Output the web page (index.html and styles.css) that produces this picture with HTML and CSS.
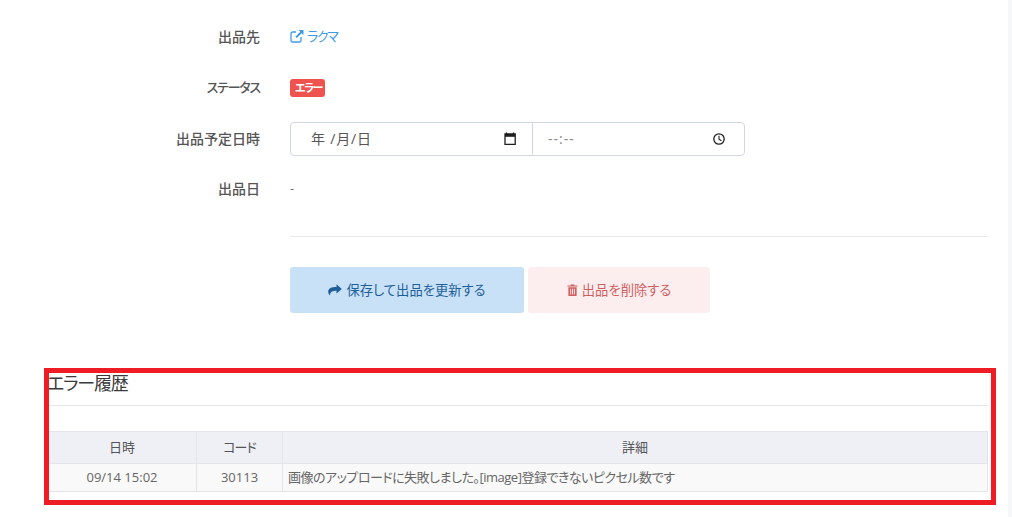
FILE: index.html
```html
<!DOCTYPE html>
<html lang="ja">
<head>
<meta charset="utf-8">
<title>出品</title>
<link rel="stylesheet" href="styles.css">
</head>
<body>
<main class="page">
  <form class="form">
    <div class="row">
      <div class="label">出品先</div>
      <div class="value"><a class="link" href="#"><svg class="icon-ext" viewBox="0 0 14 14" width="14" height="14"><path d="M6 3H2.6C1.7 3 1 3.7 1 4.6v6.8c0 .9.7 1.600 1.600 1.600h6.800c.9 0 1.600-.7 1.600-1.600V8" fill="none" stroke="currentColor" stroke-width="1.300"/><path d="M8.500 1H13.500V6L11.700 4.200 6.800 9.100 5.400 7.700 10.300 2.800Z" fill="currentColor"/></svg>ラクマ</a></div>
    </div>
    <div class="row">
      <div class="label label-kana">ステータス</div>
      <div class="value"><span class="badge">エラー</span></div>
    </div>
    <div class="row">
      <div class="label">出品予定日時</div>
      <div class="value">
        <div class="datetime">
          <div class="dt-field dt-date">
            <span class="dt-text">年 /月/日</span>
            <svg viewBox="0 0 12 13" width="12" height="13"><path d="M2.500 0.500V2M9.500 0.500V2" stroke="#1f1f1f" stroke-width="1.400"/><path d="M1 2h10.200v10.500H1Z" fill="none" stroke="#1f1f1f" stroke-width="1.300"/><path d="M1 2h10.200v2.800H1Z" fill="#1f1f1f"/></svg>
          </div>
          <div class="dt-field dt-time">
            <span class="dt-text dt-muted">--:--</span>
            <svg viewBox="0 0 12 12" width="12" height="12"><circle cx="6" cy="6" r="5.200" fill="none" stroke="#1f1f1f" stroke-width="1.300"/><path d="M6 2.800V6.300L8.400 7.800" fill="none" stroke="#1f1f1f" stroke-width="1.100"/></svg>
          </div>
        </div>
      </div>
    </div>
    <div class="row">
      <div class="label label-last">出品日</div>
      <div class="value value-muted">-</div>
    </div>
    <hr class="divider">
    <div class="actions">
      <button type="button" class="btn btn-primary"><svg viewBox="0 0 14 12" width="14" height="12"><path d="M8.500 0.300 13.800 4.900 8.500 9.500V6.800C5 6.800 2.500 7.300 1.800 11.500 0.700 10.300 0.200 8.900 0.200 7.600 0.200 4.200 3.500 2.900 8.500 2.900Z" fill="currentColor"/></svg><span class="btn-text">保存して出品を更新する</span></button>
      <button type="button" class="btn btn-danger"><svg viewBox="0 0 12 13" width="11" height="12"><path d="M4 1.500V.5h4v1h3.500v1.300H.5V1.500Z" fill="currentColor"/><path d="M1.500 3.500h9V13h-9ZM3.500 5v6.500h1V5ZM5.500 5v6.500h1V5ZM7.500 5v6.500h1V5Z" fill="currentColor" fill-rule="evenodd"/></svg><span class="btn-text">出品を削除する</span></button>
    </div>
  </form>
  <section class="history">
    <h2 class="history-title">エラー履歴</h2>
    <table class="table">
      <colgroup><col class="col-date"><col class="col-code"><col></colgroup>
      <thead>
        <tr><th>日時</th><th class="th-kana">コード</th><th>詳細</th></tr>
      </thead>
      <tbody>
        <tr><td class="center">09/14 15:02</td><td class="center">30113</td><td class="detail">画像のアップロードに失敗しました。[image]登録できないピクセル数です</td></tr>
      </tbody>
    </table>
  </section>
  <div class="highlight"></div>
</main>
</body>
</html>
```
FILE: styles.css
```css
* { box-sizing: border-box; }
html, body { margin: 0; padding: 0; }
body {
  height: 517px;
  overflow: hidden;
  background: #f6f7f9;
  font-family: "Open Sans", "Noto Sans CJK JP", sans-serif;
  font-size: 13px;
  font-feature-settings: "palt";
  color: #555;
}
.page {
  position: relative;
  width: 1008px;
  height: 517px;
  background: #fff;
  padding: 11px 20px 0 47px;
}
.row {
  display: flex;
  align-items: center;
  height: 51px;
}
.label {
  width: 213px;
  padding-bottom: 2px;
  text-align: right;
  font-weight: 500;
  color: #555;
  font-size: 14px;
}
.label-kana { font-size: 13px; letter-spacing: -1.2px; }
.label-last { padding-bottom: 4px; }
.value { margin-left: 30px; flex: 1; }
.value-muted { color: #777; padding-bottom: 4px; }
.link {
  display: inline-flex;
  align-items: center;
  gap: 3px;
  padding-bottom: 2px;
  color: #3f9ae5;
  text-decoration: none;
  font-size: 13px;
  letter-spacing: -1.300px;
}
.badge {
  display: inline-block;
  height: 18px;
  line-height: 18px;
  padding: 0 3px 0 5px;
  border-radius: 3px;
  background: #ef5350;
  color: #fff;
  font-size: 11px;
  font-weight: 700;
  letter-spacing: -1.500px;
}
.datetime {
  display: flex;
  width: 455px;
  height: 34px;
  border: 1px solid #d3d8e6;
  border-radius: 4px;
  background: #fff;
}
.dt-field {
  display: flex;
  align-items: center;
  justify-content: space-between;
}
.dt-date {
  width: 242px;
  padding: 0 16px 0 20px;
  border-right: 1px solid #d3d8e6;
}
.dt-time {
  flex: 1;
  padding: 0 19px 0 15px;
}
.dt-text { font-size: 14px; color: #555; letter-spacing: .8px; padding-bottom: 2px; }
.dt-muted { color: #888; letter-spacing: 1px; padding-bottom: 0; }
.divider {
  height: 1px;
  border: 0;
  margin: 21px 0 30px 243px;
  background: #e8e9ee;
}
.actions {
  display: flex;
  gap: 4px;
  margin-left: 243px;
}
.btn {
  display: flex;
  align-items: center;
  justify-content: center;
  gap: 4px;
  height: 46px;
  border: 0;
  border-radius: 3px;
  font-family: inherit;
  font-size: 13.300px;
  font-feature-settings: inherit;
}
.btn-text { padding-bottom: 2px; }
.btn-primary { width: 234px; background: #c8e1f7; color: #1e5f99; }
.btn-danger { width: 182px; background: #fceeef; color: #cf5f5f; }
.history { margin-top: 55px; }
.history-title {
  margin: 0;
  height: 38px;
  line-height: 30px;
  font-size: 18px;
  font-weight: 400;
  letter-spacing: -1.200px;
  color: #3a3a3a;
  border-bottom: 1px solid #e6e7ea;
}
.table {
  width: 941px;
  margin-top: 25px;
  border-collapse: collapse;
  table-layout: fixed;
  font-size: 13px;
  color: #666;
}
.col-date { width: 149px; }
.col-code { width: 86px; }
.table th, .table td { border: 1px solid #e3e5ea; }
.table th {
  height: 32px;
  padding: 0 0 2px;
  background: #eff0f5;
  font-weight: 400;
  color: #555;
}
.th-kana { letter-spacing: -1px; }
.table td {
  height: 28px;
  padding: 0 5px 2px;
  background: #f9f9f9;
}
.detail { letter-spacing: -.5px; }
.center { text-align: center; }
.highlight {
  position: absolute;
  left: 44px;
  top: 368px;
  width: 952px;
  height: 137px;
  border: 5px solid #ee1c25;
  pointer-events: none;
}
```
